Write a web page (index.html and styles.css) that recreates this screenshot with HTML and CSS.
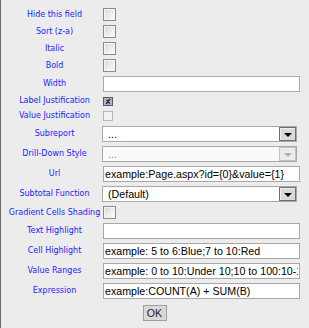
FILE: index.html
```html
<!DOCTYPE html>
<html>
<head>
<meta charset="utf-8">
<link rel="stylesheet" href="styles.css">
</head>
<body>
<div class="form">
  <div class="lbl">Hide this field</div>
  <div class="ctl h13"><span class="cb"></span></div>

  <div class="lbl">Sort (z-a)</div>
  <div class="ctl h13"><span class="cb"></span></div>

  <div class="lbl">Italic</div>
  <div class="ctl h13"><span class="cb"></span></div>

  <div class="lbl">Bold</div>
  <div class="ctl h13"><span class="cb"></span></div>

  <div class="lbl">Width</div>
  <div class="ctl"><input class="txt" type="text" value=""></div>

  <div class="lbl">Label Justification</div>
  <div class="ctl h10">
    <svg class="icon" width="10" height="9" viewBox="0 0 10 9">
      <rect x="0.5" y="0.5" width="9" height="8" fill="#c8c8c8" stroke="#5a5a5a"/>
      <rect x="1" y="1" width="8" height="7" fill="#b9b9b9"/>
      <path d="M3 2 L7 7 M7 2 L3 7" stroke="#1c2a6e" stroke-width="1.3"/>
      <rect x="2" y="2" width="2" height="1" fill="#e0b020"/>
      <rect x="6" y="5" width="1" height="2" fill="#c03030"/>
      <rect x="7" y="2" width="1" height="1" fill="#3060d0"/>
    </svg>
  </div>

  <div class="lbl">Value Justification</div>
  <div class="ctl h12"><span class="cb small"></span></div>

  <div class="lbl">Subreport</div>
  <div class="ctl"><div class="sel"><span class="seltext">...</span><span class="btn"><span class="tri"></span></span></div></div>

  <div class="lbl">Drill-Down Style</div>
  <div class="ctl"><div class="sel disabled"><span class="seltext">...</span><span class="btn"><span class="tri"></span></span></div></div>

  <div class="lbl">Url</div>
  <div class="ctl"><input class="txt" type="text" value="example:Page.aspx?id={0}&amp;value={1}"></div>

  <div class="lbl">Subtotal Function</div>
  <div class="ctl"><div class="sel"><span class="seltext">(Default)</span><span class="btn"><span class="tri"></span></span></div></div>

  <div class="lbl">Gradient Cells Shading</div>
  <div class="ctl h13"><span class="cb"></span></div>

  <div class="lbl">Text Highlight</div>
  <div class="ctl"><input class="txt" type="text" value=""></div>

  <div class="lbl">Cell Highlight</div>
  <div class="ctl"><input class="txt" type="text" value="example: 5 to 6:Blue;7 to 10:Red"></div>

  <div class="lbl">Value Ranges</div>
  <div class="ctl"><input class="txt" type="text" value="example: 0 to 10:Under 10;10 to 100:10-100;100 to 1000:100-1000"></div>

  <div class="lbl">Expression</div>
  <div class="ctl"><input class="txt" type="text" value="example:COUNT(A) + SUM(B)"></div>
</div>
<div class="actions"><button class="ok" type="button">OK</button></div>
</body>
</html>
```

FILE: styles.css
```css
* { box-sizing: border-box; }
html, body {
  margin: 0;
  padding: 0;
  height: 100%;
  background: #ececec;
}
body {
  border-left: 1px solid #6b6b6b;
  padding-top: 8px;
}
.form {
  display: grid;
  grid-template-columns: 97px 1fr;
  row-gap: 4px;
  padding: 0 9px 0 5px;
}
.lbl {
  display: flex;
  align-items: center;
  justify-content: center;
  text-align: center;
  white-space: nowrap;
  font-family: "DejaVu Sans", Verdana, sans-serif;
  font-size: 8px;
  line-height: 10px;
  color: #1c1cff;
}
.ctl {
  display: flex;
  align-items: center;
  min-height: 10px;
}
.h13 { height: 13px; }
.h12 { height: 12px; }
.h10 { height: 10px; }
.cb {
  display: block;
  width: 13px;
  height: 13px;
  border: 1px solid #8c8c8c;
  background: linear-gradient(135deg, #d6d6d6 0%, #f0f0f0 60%, #fcfcfc 100%);
  box-shadow: inset 0 0 0 1px #f6f6f6;
}
.cb.small {
  width: 10px;
  height: 10px;
  border-color: #b8b8b8;
  background: #f2f2f2;
  box-shadow: none;
}
.icon { display: block; margin-top: 1px; }
.txt {
  display: block;
  width: 100%;
  height: 16px;
  margin: 0;
  padding: 0 1px;
  border: 1px solid #a8a8a8;
  background: #fff;
  color: #000;
  font-family: "Liberation Sans", Arial, sans-serif;
  font-size: 10.67px;
  outline: none;
}
.sel {
  display: flex;
  align-items: center;
  width: 195px;
  height: 16px;
  margin-left: -1px;
  border: 1px solid #a8a8a8;
  background: #fff;
  font-family: "Liberation Sans", Arial, sans-serif;
  font-size: 10.67px;
  color: #000;
}
.seltext {
  flex: 1;
  padding-left: 5px;
  white-space: nowrap;
  overflow: hidden;
}
.btn {
  display: flex;
  align-items: flex-end;
  justify-content: center;
  width: 17px;
  height: 14px;
  border: 1px solid #707070;
  background: #d9d9d9;
  box-shadow: inset 1px 1px 0 #f0f0f0;
  padding-bottom: 3px;
}
.tri {
  width: 0;
  height: 0;
  border-left: 4px solid transparent;
  border-right: 4px solid transparent;
  border-top: 4px solid #000;
}
.sel.disabled { background: #fafafa; color: #8a8a8a; }
.sel.disabled .btn { border-color: #c4c4c4; background: #ececec; box-shadow: none; }
.sel.disabled .tri { border-top-color: #b0b0b0; }
.actions {
  text-align: center;
  padding-top: 4px;
  padding-right: 1px;
}
.ok {
  height: 16px;
  width: 24px;
  padding: 0;
  margin: 0;
  border: 1px solid #a0a0a0;
  background: #d9d9d9;
  color: #1a1a1a;
  font-family: "Liberation Sans", Arial, sans-serif;
  font-size: 10.67px;
  line-height: 14px;
}
```
